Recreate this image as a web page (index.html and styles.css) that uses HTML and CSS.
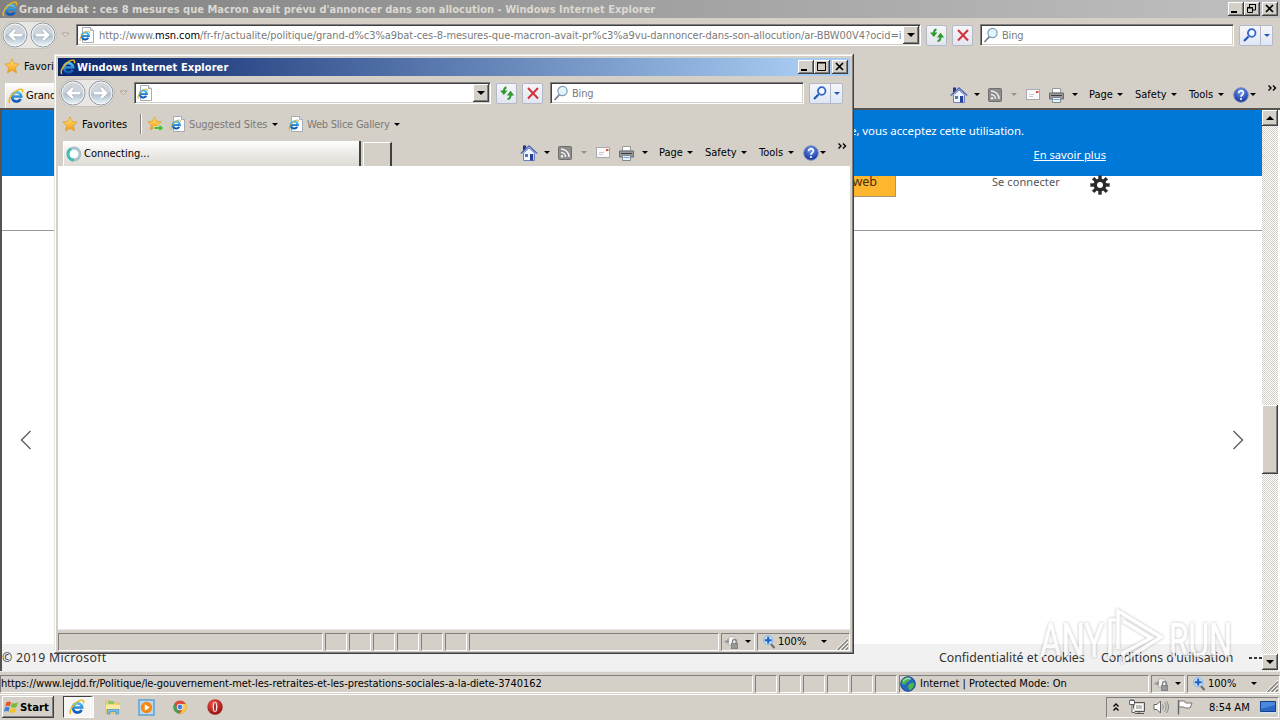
FILE: index.html
```
<!DOCTYPE html>
<html lang="fr">
<head>
  <meta charset="UTF-8">
  <title>Windows Internet Explorer</title>
  <link rel="stylesheet" href="styles.css">
</head>
<body>

  <!-- shared icons -->
  <svg class="defs" width="0" height="0">
    <defs>
      <linearGradient id="gBlue" x1="0" y1="0" x2="0" y2="1"><stop offset="0" stop-color="#4fc3f7"/><stop offset="1" stop-color="#0b56b5"/></linearGradient>
      <linearGradient id="gRound" x1="0" y1="0" x2="0" y2="1"><stop offset="0" stop-color="#d3d6da"/><stop offset=".45" stop-color="#cdd4db"/><stop offset=".55" stop-color="#b3c1cd"/><stop offset="1" stop-color="#eef8fd"/></linearGradient>
      <linearGradient id="gStar" x1="0" y1="0" x2="0" y2="1"><stop offset="0" stop-color="#ffe680"/><stop offset="1" stop-color="#f59a0c"/></linearGradient>
      <radialGradient id="gHelp" cx=".5" cy=".3" r=".7"><stop offset="0" stop-color="#6f9cf0"/><stop offset="1" stop-color="#132f9c"/></radialGradient>
      <radialGradient id="gOpera" cx=".4" cy=".3" r=".8"><stop offset="0" stop-color="#f0564a"/><stop offset="1" stop-color="#8d0508"/></radialGradient>
    </defs>
    <symbol id="ie" viewBox="0 0 16 16">
      <path d="M12.700 10.900A4.700 4.700 0 1 1 13.200 8.500H5" fill="none" stroke="url(#gBlue)" stroke-width="2.700"/>
      <path d="M2 15C-.8 12.500 4.200 4.800 9.400 2.200 12.600.5 15.400.6 14.400 4.200" fill="none" stroke="#e8b81c" stroke-width="1.500"/>
    </symbol>
    <symbol id="iepage" viewBox="0 0 16 16">
      <path d="M3.500.5h8l3 3v12h-11z" fill="#fff" stroke="#a5acb8"/>
      <path d="M11.500.5v3h3" fill="#dfe5ee" stroke="#a5acb8"/>
      <path d="M9.300 10.800A3.500 3.500 0 1 1 9.800 9H3.800" fill="none" stroke="url(#gBlue)" stroke-width="2.200"/>
      <path d="M1.500 14C-.3 12.500 3 7 6.500 5 9 3.500 11 3.800 10.300 6" fill="none" stroke="#d8ac28"/>
    </symbol>
    <symbol id="star" viewBox="0 0 16 16">
      <path d="M8 .8l2.100 4.700 5.100.6-3.800 3.500 1 5.200L8 12.200l-4.400 2.600 1-5.200L.8 6.100l5.100-.6z" fill="url(#gStar)" stroke="#e09a2a" stroke-width=".8"/>
    </symbol>
    <symbol id="back" viewBox="0 0 26 26">
      <circle cx="13" cy="13" r="12" fill="url(#gRound)" stroke="#8f969d"/>
      <circle cx="13" cy="13" r="10.900" fill="none" stroke="#f4f8fb" stroke-width="1"/>
      <path d="M20 13H8M13 8l-5 5 5 5" fill="none" stroke="#97a5b2" stroke-width="4"/>
      <path d="M20 13H8M13 8l-5 5 5 5" fill="none" stroke="#fff" stroke-width="2.800"/>
    </symbol>
    <symbol id="refresh" viewBox="0 0 16 16">
      <path d="M7.500 2.500Q5 2.500 5 6M8.500 14Q11.500 14 11.500 10" fill="none" stroke="#2f9a2f" stroke-width="2"/>
      <path d="M1 5.500h7.500L4.800 10zM7.800 10.500h7.400L11.500 5.800z" fill="#2f9a2f"/>
    </symbol>
    <symbol id="stop" viewBox="0 0 16 16"><path d="M3 3l10 10.500M13 3L3 13.500" stroke="#d2323c" stroke-width="2" fill="none"/></symbol>
    <symbol id="lens" viewBox="0 0 16 16">
      <path d="M6.500 9.500L1.500 15" stroke="#77808a" stroke-width="1.800"/>
      <circle cx="9.500" cy="6" r="4.600" fill="#e3f4fb" stroke="#7b9cb4" stroke-width="1.200"/>
    </symbol>
    <symbol id="golens" viewBox="0 0 16 16">
      <path d="M6.500 9.500L2 14" stroke="#2456b8" stroke-width="2.200"/>
      <circle cx="9.700" cy="6" r="3.800" fill="#f4f9ff" stroke="#2e66cc" stroke-width="1.800"/>
    </symbol>
    <symbol id="home" viewBox="0 0 18 18">
      <path d="M3 1.500h3V5L3 8z" fill="#27308a"/>
      <path d="M3.500 9L9 4l5.500 5v7.500h-11z" fill="#f0f5ff" stroke="#6c82c8"/>
      <path d="M.8 9.500L9 2l8.200 7.500" fill="none" stroke="#4d68bd" stroke-width="1.400"/>
      <path d="M10 10h3.200v6.500H10z" fill="#2a3f96"/><path d="M5 10h3v3H5z" fill="#5078b8"/>
    </symbol>
    <symbol id="rss" viewBox="0 0 14 14">
      <rect x=".5" y=".5" width="13" height="13" rx="1" fill="#8d8d8d" stroke="#6f6f6f"/>
      <path d="M3 3a8 8 0 0 1 8 8M3 6.500A4.500 4.500 0 0 1 7.500 11" fill="none" stroke="#f2f2f2" stroke-width="1.500"/><circle cx="4" cy="10.200" r="1.200" fill="#f2f2f2"/>
    </symbol>
    <symbol id="mail" viewBox="0 0 14 11">
      <rect x=".5" y=".5" width="13" height="10" fill="#fbfbfb" stroke="#a9a9b0"/>
      <path d="M10 2h2.500v2H10z" fill="#d8503c"/><path d="M3 5.500h5M3 7.500h4" stroke="#c9c9cf"/>
    </symbol>
    <symbol id="print" viewBox="0 0 17 16">
      <path d="M4.500 1.500h8V6h-8z" fill="#fff" stroke="#999"/>
      <path d="M1.500 6h14v6h-14z" fill="#97999c" stroke="#6a6c70"/><path d="M3 8.500h11" stroke="#3b3d40"/>
      <path d="M4.500 10.500h8v5h-8z" fill="#e8f2fa" stroke="#808890"/><path d="M5.500 12.500h6" stroke="#6ea6d8"/>
    </symbol>
    <symbol id="help" viewBox="0 0 16 16">
      <circle cx="8" cy="8" r="7.300" fill="url(#gHelp)" stroke="#7f8fc0" stroke-width="1"/>
      <path d="M5.600 6.200C5.600 2.800 10.600 3 10.400 6 10.300 7.800 8 7.700 8 9.700" fill="none" stroke="#fff" stroke-width="1.700"/><circle cx="8" cy="12" r="1.100" fill="#fff"/>
    </symbol>
    <symbol id="lock" viewBox="0 0 17 16">
      <path d="M5 11V6C5 1.500 12.500 1.500 12.500 6v5z" fill="#f4f4f4" stroke="#aaa" stroke-width=".8"/>
      <path d="M.5 8L6 4.500v5z" fill="#9c9c9c"/>
      <path d="M9.500 9V7.500a2 2 0 0 1 4 0V9" fill="none" stroke="#888" stroke-width="1.300"/><path d="M8 9h7v6H8z" fill="#858585"/><path d="M9 11h5M9 13h5" stroke="#aaa"/>
    </symbol>
    <symbol id="zoomin" viewBox="0 0 13 14">
      <path d="M7.500 8.500L11.500 13" stroke="#7a6d6d" stroke-width="2.200"/>
      <circle cx="5.200" cy="5.200" r="4.600" fill="#c4e0f6" stroke="#8ab8de"/><path d="M5.200 1.800v6.800M1.800 5.200h6.800" stroke="#1e5fc4" stroke-width="2"/>
    </symbol>
    <symbol id="grip" viewBox="0 0 12 12">
      <path d="M0 12L12 0M4 12l8-8M8 12l4-4" stroke="#fff"/><path d="M1.500 12L12 1.500M5.500 12L12 5.500M9.500 12L12 9.500" stroke="#808080" stroke-width="1.300"/>
    </symbol>
  </svg>

  <div class="desktop">

    <!-- main browser window -->
    <div class="browser main-win">
      <div class="titlebar inactive">
        <svg class="i16"><use href="#ie"/></svg>
        <span class="title title-main">Grand débat : ces 8 mesures que Macron avait prévu d'annoncer dans son allocution - Windows Internet Explorer</span>
        <div class="winbtns">
          <b><svg viewBox="0 0 16 14"><path d="M3 9h6v2H3z"/></svg></b>
          <b><svg viewBox="0 0 16 14"><path d="M5.500 5V2.500h6V8H9M5 2.500h7M3.500 5.500h5v5h-5zM3 6h6" fill="none" stroke="#000"/></svg></b>
          <b class="close"><svg viewBox="0 0 16 14"><path d="M4 3l7 7M11 3l-7 7" stroke="#000" stroke-width="1.700"/></svg></b>
        </div>
      </div>
      <div class="nav">
        <div class="arrows"><svg><use href="#back"/></svg><svg class="flip"><use href="#back"/></svg></div>
        <svg class="hollow" viewBox="0 0 9 6"><path d="M1 1h7L4.500 4.700z" fill="#e4e1db" stroke="#aaa69f"/></svg>
        <div class="address">
          <svg class="i16"><use href="#iepage"/></svg>
          <span class="url">http://www.<em>msn.com</em>/fr-fr/actualite/politique/grand-d%c3%a9bat-ces-8-mesures-que-macron-avait-pr%c3%a9vu-dannoncer-dans-son-allocution/ar-BBW00V4?ocid=i</span>
          <span class="combo"><i class="arr"></i></span>
        </div>
        <div class="sq"><svg class="i16"><use href="#refresh"/></svg></div>
        <div class="sq"><svg class="i16"><use href="#stop"/></svg></div>
        <div class="search"><svg class="i16"><use href="#lens"/></svg><span>Bing</span></div>
        <div class="go"><svg class="i16"><use href="#golens"/></svg><span><i class="arr blue"></i></span></div>
      </div>
      <div class="favs">
        <svg class="i16"><use href="#star"/></svg><span class="fav-label">Favorites</span>
      </div>
      <div class="tabs">
        <div class="tab"><svg class="i16"><use href="#ie"/></svg><span>Grand débat : ces 8 mesures...</span></div>
        <div class="cmd">
          <svg class="c-home"><use href="#home"/></svg><i class="arr"></i>
          <svg class="c-rss"><use href="#rss"/></svg><i class="arr dim"></i>
          <svg class="c-mail"><use href="#mail"/></svg>
          <svg class="c-print"><use href="#print"/></svg><i class="arr"></i>
          <span class="c-page">Page</span><i class="arr"></i>
          <span class="c-safety">Safety</span><i class="arr"></i>
          <span class="c-tools">Tools</span><i class="arr"></i>
          <svg class="c-help"><use href="#help"/></svg><i class="arr"></i>
          <svg class="more" viewBox="0 0 9 6"><path d="M.5.500L3 3 .5 5.500M5 .5L7.500 3 5 5.500" fill="none" stroke="#000" stroke-width="1.400"/></svg>
        </div>
      </div>
      <div class="content site">
        <div class="page">
          <div class="cookie">
            <p>En continuant à naviguer sur ce site, vous acceptez cette utilisation.</p>
            <a>En savoir plus</a>
          </div>
          <div class="msn-head">
            <span class="web">web</span>
            <span class="login">Se connecter</span>
            <svg class="gear" viewBox="-10 -10 20 20">
              <g fill="#2b2b2b"><path id="t" d="M-1.700-9.700h3.400v19.400h-3.400z"/><use href="#t" transform="rotate(45)"/><use href="#t" transform="rotate(90)"/><use href="#t" transform="rotate(135)"/><circle r="6.500"/></g><circle r="3" fill="#fff"/>
            </svg>
          </div>
          <div class="gallery">
            <svg viewBox="0 0 12 20"><path d="M10.500 1L1.500 10l9 9"/></svg>
            <svg viewBox="0 0 12 20"><path d="M1.500 1l9 9-9 9"/></svg>
          </div>
          <div class="footer">
            <span class="copy">© 2019 Microsoft</span>
            <span class="conf">Confidentialité et cookies</span>
            <span class="cond">Conditions d'utilisation</span>
            <span class="dots"><i></i><i></i><i></i></span>
          </div>
        </div>
        <div class="scroll">
          <b><i class="up"></i></b>
          <b class="thumb"></b>
          <b class="down"><i class="arr"></i></b>
        </div>
      </div>
      <div class="status">
        <div class="cell first"><span class="link">https://www.lejdd.fr/Politique/le-gouvernement-met-les-retraites-et-les-prestations-sociales-a-la-diete-3740162</span></div>
        <div class="cell s"></div><div class="cell s"></div><div class="cell s"></div><div class="cell s"></div><div class="cell s"></div><div class="cell s"></div>
        <div class="cell zone">
          <svg class="i16" viewBox="0 0 16 16"><circle cx="8" cy="8" r="7.300" fill="#2468c0" stroke="#164a8a"/><path d="M3 3c3-2.500 6-2 7-1.300L9 5 6.500 6.500 4 9 1.500 7zM9 8l4-1.500 1.500 2-2 4-3 2-1.500-3z" fill="#4cb748"/><path d="M3 5q4-4 8-2" stroke="#bfe8f8" fill="none"/></svg>
          <span>Internet | Protected Mode: On</span>
        </div>
        <div class="cell prot"><svg><use href="#lock"/></svg><i class="arr"></i></div>
        <div class="cell zoom"><svg class="z"><use href="#zoomin"/></svg><span>100%</span><i class="arr"></i><svg class="grip"><use href="#grip"/></svg></div>
      </div>
    </div>

    <!-- taskbar -->
    <div class="taskbar">
      <div class="start">
        <svg viewBox="0 0 16 16"><path d="M2.500 3C4.500 1.500 6 2 7.500 3L6.300 7.500C5 6.500 3.300 6.300 1.300 7.500z" fill="#e8562a"/><path d="M8.500 3.500c2 1 4 1 6.500-.5L13.500 7.800c-2 1.200-4 1.200-6.200.2z" fill="#7ab93a"/><path d="M1 8.500C3 7.300 4.600 7.500 6 8.500L4.800 13C3.500 12 1.500 12.200 0 13z" fill="#3f83d8"/><path d="M7 9c2 1 4 1 6 0l-1.200 4.500c-2 1-4 1-6 0z" fill="#f7c325"/></svg>
        <span>Start</span>
      </div>
      <div class="task on"><svg><use href="#ie"/></svg></div>
      <svg class="t2" viewBox="0 0 18 18"><path d="M2 3h5l1 2h7v10H2z" fill="#f3d977" stroke="#dcbf66"/><path d="M4 3h6v3H4z" fill="#8fc66b"/><path d="M2 7h14v4H2z" fill="#f8e9a4"/><path d="M3.500 16v-4.500h11V16h-2.500v-2.500H6V16z" fill="#7fc1e8" stroke="#4b95c8" stroke-width=".8"/></svg>
      <svg class="t3" viewBox="0 0 17 17"><rect x="1" y="1" width="15" height="15" fill="#b9daf4" stroke="#5f9fd4" stroke-width="1.500"/><circle cx="8.500" cy="8.500" r="5.700" fill="#f48a16"/><path d="M6.800 5.300l5 3.200-5 3.200z" fill="#fff"/></svg>
      <svg class="t4" viewBox="0 0 14 14"><circle cx="7" cy="7" r="6.600" fill="#de4a38"/><path d="M1.300 3.700L5 10l2 3.600A6.600 6.600 0 0 1 1.300 3.700z" fill="#3da556"/><path d="M7 4h6A6.600 6.600 0 0 1 7 13.600l3-5z" fill="#f7cd37"/><circle cx="7" cy="7" r="3.200" fill="#f3f3f3"/><circle cx="7" cy="7" r="2.400" fill="#4a7fe0"/></svg>
      <svg class="t5" viewBox="0 0 16 16"><circle cx="8" cy="8" r="7.700" fill="url(#gOpera)"/><ellipse cx="8" cy="8" rx="2.300" ry="5.200" fill="#f6e9e6"/><ellipse cx="8" cy="8" rx=".9" ry="4.600" fill="#b31217"/></svg>
      <div class="tray">
        <svg class="chev" viewBox="0 0 6 9"><path d="M.5 3.500L3 1l2.500 2.500M.5 7.500L3 5l2.500 2.500" fill="none" stroke="#000" stroke-width="1.300"/></svg>
        <svg class="net" viewBox="0 0 16 16"><path d="M4.500 3.500h11v9h-11z" fill="#d8d8d4" stroke="#555"/><path d="M6.500 5.500h7v5h-7z" fill="#c0beb8" stroke="#fff"/><path d="M6 14.500h9M10 12.500v2" stroke="#555"/><path d="M.5 1.500h5v4h-5zM2 0v2M4 0v2M3 5.500v8h3" fill="#fff" stroke="#666"/></svg>
        <svg class="vol" viewBox="0 0 16 16"><path d="M1 5.500h3L7.500 2v12L4 10.500H1z" fill="#fff" stroke="#666"/><path d="M9.500 5.500q2 2.500 0 5M11.500 3.500q3.500 4.500 0 9M13.500 2q4 6 0 12" fill="none" stroke="#888"/></svg>
        <svg class="flag" viewBox="0 0 16 16"><path d="M1.500 1v14.500" stroke="#666" stroke-width="1.400"/><path d="M2 2h5.500l1 2h6.500L13 9H8L7 8H2z" fill="#fff" stroke="#777"/></svg>
        <span class="clock">8:54 AM</span>
        <svg class="desk" viewBox="0 0 16 14"><path d="M.5 1.500h15v10H.5z" fill="#2a68c8" stroke="#173f86"/><path d="M1 2h14v3L1 9z" fill="#4c88dc"/><path d="M0 12h16v1.500H0z" fill="#cfe0f4"/></svg>
      </div>
    </div>

    <!-- popup window -->
    <div class="popup">
      <div class="browser">
        <div class="titlebar">
          <svg class="i16"><use href="#ie"/></svg>
          <span class="title title-pop">Windows Internet Explorer</span>
          <div class="winbtns">
            <b><svg viewBox="0 0 16 14"><path d="M3 9h6v2H3z"/></svg></b>
            <b><svg viewBox="0 0 16 14"><path d="M3.500 2.500h8v8h-8zM3 3h9" fill="none" stroke="#000"/></svg></b>
            <b class="close"><svg viewBox="0 0 16 14"><path d="M4 3l7 7M11 3l-7 7" stroke="#000" stroke-width="1.700"/></svg></b>
          </div>
        </div>
        <div class="nav">
          <div class="arrows"><svg><use href="#back"/></svg><svg class="flip"><use href="#back"/></svg></div>
          <svg class="hollow" viewBox="0 0 9 6"><path d="M1 1h7L4.500 4.700z" fill="#e4e1db" stroke="#aaa69f"/></svg>
          <div class="address">
            <svg class="i16"><use href="#iepage"/></svg>
            <span class="url"></span>
            <span class="combo"><i class="arr"></i></span>
          </div>
          <div class="sq"><svg class="i16"><use href="#refresh"/></svg></div>
          <div class="sq"><svg class="i16"><use href="#stop"/></svg></div>
          <div class="search"><svg class="i16"><use href="#lens"/></svg><span>Bing</span></div>
          <div class="go"><svg class="i16"><use href="#golens"/></svg><span><i class="arr blue"></i></span></div>
        </div>
        <div class="favs">
          <svg class="i16"><use href="#star"/></svg><span class="fav-label">Favorites</span>
          <i class="sep"></i>
          <svg class="addfav" viewBox="0 0 18 16"><use href="#star" width="15" height="15"/><path d="M7 10.500h5V8l5 4-5 4v-2.500H7z" fill="#4db83c" stroke="#e8f6e0" stroke-width=".7"/></svg>
          <svg class="i16"><use href="#iepage"/></svg><span class="sug">Suggested Sites</span><i class="arr"></i>
          <svg class="i16 slice"><use href="#iepage"/></svg><span class="wsg">Web Slice Gallery</span><i class="arr"></i>
        </div>
        <div class="tabs">
          <div class="tab">
            <svg class="i16" viewBox="0 0 16 16"><circle cx="8" cy="8" r="6" fill="#fff" stroke="#a9c2cb" stroke-width="2.800"/><path d="M8 14A6 6 0 0 1 5 2.800" fill="none" stroke="#3fbfb4" stroke-width="2.800"/></svg>
            <span class="connecting">Connecting...</span>
          </div>
          <div class="newtab"></div>
          <div class="cmd">
            <svg class="c-home"><use href="#home"/></svg><i class="arr"></i>
            <svg class="c-rss"><use href="#rss"/></svg><i class="arr dim"></i>
            <svg class="c-mail"><use href="#mail"/></svg>
            <svg class="c-print"><use href="#print"/></svg><i class="arr"></i>
            <span class="c-page">Page</span><i class="arr"></i>
            <span class="c-safety">Safety</span><i class="arr"></i>
            <span class="c-tools">Tools</span><i class="arr"></i>
            <svg class="c-help"><use href="#help"/></svg><i class="arr"></i>
            <svg class="more" viewBox="0 0 9 6"><path d="M.5.500L3 3 .5 5.500M5 .5L7.500 3 5 5.500" fill="none" stroke="#000" stroke-width="1.400"/></svg>
          </div>
        </div>
        <div class="content"></div>
        <div class="status">
          <div class="cell first"></div>
          <div class="cell s"></div><div class="cell s"></div><div class="cell s"></div><div class="cell s"></div><div class="cell s"></div><div class="cell s"></div>
          <div class="cell zone"></div>
          <div class="cell prot"><svg><use href="#lock"/></svg><i class="arr"></i></div>
          <div class="cell zoom"><svg class="z"><use href="#zoomin"/></svg><span>100%</span><i class="arr"></i><svg class="grip"><use href="#grip"/></svg></div>
        </div>
      </div>
    </div>

    <!-- watermark -->
    <svg class="watermark" viewBox="0 0 200 66">
      <g class="wm-text">
        <text x="5" y="52" textLength="64" lengthAdjust="spacingAndGlyphs">ANY</text>
        <text x="134" y="52" textLength="63" lengthAdjust="spacingAndGlyphs">RUN</text>
      </g>
      <path d="M83 44V6l43 26-38 24V46M75 54V15h6M88 16l28 17-28 15"/>
    </svg>
  </div>

</body>
</html>
```

FILE: styles.css
```
body {
  margin: 0;
  font-family: "DejaVu Sans Condensed", "DejaVu Sans", sans-serif;
  font-size: 11px;
  color: #000;
  overflow: hidden;
}

svg { display: block; flex: none; }
i { font-style: normal; flex: none; }
.defs { position: absolute; }
.i16 { width: 16px; height: 16px; }

.desktop {
  position: relative;
  width: 1280px;
  height: 720px;
  background: #d4d0c8;
  overflow: hidden;
  white-space: nowrap;
}

.browser {
  display: flex;
  flex-direction: column;
  height: 100%;
  background: #d4d0c8;
}
.main-win { height: 694px; }

/* popup lies over the main window */
.popup {
  position: absolute;
  left: 54px;
  top: 54px;
  width: 800px;
  height: 600px;
  box-sizing: border-box;
  padding: 4px 4px 2px;
  background: #d4d0c8;
  box-shadow: inset -1px -1px #404040, inset 1px 1px #e8e6e0, inset -2px -2px #808080, inset 2px 2px #fff;
}

/* title bar */
.titlebar {
  display: flex;
  align-items: center;
  height: 18px;
  flex: none;
  padding: 0 2px 0 2px;
  background: linear-gradient(90deg, #0a246a, #a6caf0 94%);
}
.titlebar.inactive {
  background: linear-gradient(90deg, #808080, #c0c0c0);
  color: #d4d0c8;
}
.title {
  flex: 1;
  margin-left: 1px;
  font-weight: bold;
  color: #fff;
  letter-spacing: .02px;
}
.title-pop { letter-spacing: .07px; }
.inactive .title { color: #dcd9d2; }
.winbtns { display: flex; }
.winbtns b {
  width: 16px;
  height: 14px;
  background: #d4d0c8;
  box-shadow: inset -1px -1px #404040, inset 1px 1px #fff, inset -2px -2px #808080;
}
.winbtns .close { margin-left: 2px; }

/* navigation row */
.nav {
  display: flex;
  align-items: center;
  height: 32px;
  flex: none;
  padding: 2px 7px 0 2px;
  box-sizing: border-box;
}
.arrows {
  display: flex;
  gap: 2px;
  background: #e9e7e3;
  border-radius: 13px;
  box-shadow: 0 0 0 1px #c6c2bb;
}
.arrows svg { width: 26px; height: 26px; }
.arrows .flip { transform: scaleX(-1); }
.hollow {
  width: 9px;
  height: 6px;
  margin: 0 6px 0 5px;
}
.address, .search {
  display: flex;
  align-items: center;
  height: 22px;
  box-sizing: border-box;
  background: #fff;
  border: 1px solid #808080;
  border-right-color: #fff;
  border-bottom-color: #fff;
  box-shadow: inset 1px 1px #404040, inset -1px -1px #d4d0c8;
  color: #7b7b7b;
}
.address {
  flex: 1;
  min-width: 0;
  padding: 0 1px 0 2px;
}
.url {
  flex: 1;
  min-width: 0;
  overflow: hidden;
  margin-left: 4px;
  letter-spacing: -.058px;
}
.url em { font-style: normal; color: #000; }
.combo {
  display: flex;
  align-items: center;
  justify-content: center;
  width: 16px;
  height: 18px;
  background: #d4d0c8;
  box-shadow: inset -1px -1px #404040, inset 1px 1px #fff, inset -2px -2px #808080;
}
.arr {
  width: 0;
  height: 0;
  border: 3px solid transparent;
  border-top-color: #000;
  border-bottom: 0;
}
.combo .arr { border-width: 4px 4px 0; }
.arr.dim { border-top-color: #96928b; }
.arr.blue { border-top-color: #2456b8; }
.sq {
  display: flex;
  align-items: center;
  justify-content: center;
  width: 21px;
  height: 21px;
  box-sizing: border-box;
  margin-left: 5px;
  border: 1px solid #b3b9c9;
  border-radius: 2px;
  background: linear-gradient(#f5f6f9, #e2e6ef);
}
.search {
  width: 254px;
  margin-left: 7px;
  padding-left: 2px;
}
.search span { margin-left: 3px; letter-spacing: -.2px; }
.go {
  display: flex;
  align-items: center;
  width: 34px;
  height: 21px;
  box-sizing: border-box;
  margin-left: 5px;
  padding-left: 2px;
  border: 1px solid #b3b9c9;
  border-radius: 2px;
  background: linear-gradient(#f5f6f9, #dfe7f5);
}
.go span {
  display: flex;
  align-items: center;
  justify-content: center;
  flex: 1;
  height: 100%;
  margin-left: 2px;
  border-left: 1px solid #b3b9c9;
}

/* favorites row */
.favs {
  display: flex;
  align-items: center;
  height: 32px;
  flex: none;
  padding-left: 4px;
}
.fav-label { width: 46px; margin-left: 4px; letter-spacing: .08px; }
.sep {
  width: 1px;
  height: 20px;
  margin: 0 5px 0 12px;
  background: #808080;
  border-right: 1px solid #fff;
}
.addfav { width: 18px; height: 16px; margin-right: 5px; }
.sug, .wsg { margin-left: 3px; color: #7d7a75; }
.sug { width: 79px; margin-right: 4px; letter-spacing: -.1px; }
.wsg { width: 83px; margin-right: 4px; letter-spacing: -.22px; }
.slice { margin-left: 10px; }

/* tabs + command bar */
.tabs {
  display: flex;
  align-items: flex-end;
  height: 26px;
  flex: none;
  padding-left: 5px;
}
.tab {
  display: flex;
  align-items: center;
  width: 298px;
  height: 25px;
  box-sizing: border-box;
  padding-left: 2px;
  background: linear-gradient(#fff, #f0eeeb 40%, #dedad4);
  border-left: 1px solid #fff;
  border-right: 2px solid #404040;
}
.tab span { margin-left: 2px; }
.newtab {
  width: 29px;
  height: 24px;
  box-sizing: border-box;
  margin-left: 2px;
  border: 1px solid #fff;
  border-bottom: 0;
  border-right: 2px solid #404040;
}
.cmd {
  display: flex;
  align-items: center;
  height: 27px;
  margin-left: auto;
  padding-right: 3px;
}
.cmd span { display: block; }
.c-home { width: 18px; height: 18px; margin-right: 6px; }
.c-rss { width: 14px; height: 14px; margin: 0 9px 0 8px; }
.c-mail { width: 14px; height: 11px; margin: 0 8px 0 9px; }
.c-print { width: 17px; height: 16px; margin-right: 7px; }
.c-page { width: 25px; margin: 0 3px 0 11px; }
.c-safety { width: 32px; margin: 0 4px 0 12px; }
.c-tools { width: 26px; margin: 0 3px 0 12px; }
.c-help { width: 16px; height: 16px; margin: 0 1px 0 9px; }
.more { width: 9px; height: 6px; margin: -14px 0 0 12px; }

/* page area */
.content {
  flex: 1;
  min-height: 0;
  background: #fff;
}
.site {
  display: flex;
  box-sizing: border-box;
  padding-right: 2px;
  border-top: 2px solid #55534f;
  border-left: 2px solid #55534f;
}
.page {
  display: flex;
  flex-direction: column;
  flex: 1;
  font-family: "Noto Sans", "Open Sans", sans-serif;
}
.cookie {
  display: flex;
  flex-direction: column;
  align-items: flex-end;
  height: 66px;
  background: #0078d7;
  color: #fff;
  font-size: 11.500px;
  line-height: 16px;
}
.cookie p {
  margin: 13px 238px 0 0;
  letter-spacing: -.09px;
}
.cookie a {
  margin: 8px 156px 0 0;
  font-size: 11.200px;
  text-decoration: underline;
}
.msn-head {
  display: flex;
  height: 54px;
  border-bottom: 1px solid #999;
}
.web {
  width: 101px;
  height: 21px;
  margin-left: 793px;
  border: 1px solid #a89870;
  border-top: 0;
  background: #ffb62f;
  color: #40300c;
  font-size: 12.500px;
  line-height: 11px;
  text-align: right;
  padding-right: 18px;
  box-sizing: border-box;
}
.login {
  width: 69px;
  margin-left: 96px;
  font-size: 11px;
  line-height: 12px;
  letter-spacing: .08px;
  color: #555;
}
.gear { width: 20px; height: 20px; margin-left: 29px; margin-top: -1px; }
.gallery {
  display: flex;
  justify-content: space-between;
  flex: 1;
  padding: 199px 18px 0;
}
.gallery svg { width: 12px; height: 20px; }
.gallery path { fill: none; stroke: #666; stroke-width: 1.5; }
.footer {
  display: flex;
  align-items: center;
  height: 27px;
  background: #f1f1f1;
  color: #333;
  font-size: 12.300px;
}
.copy { width: 105px; letter-spacing: .33px; }
.conf { width: 147px; margin-left: 832px; }
.cond { width: 133px; margin-left: 15px; }
.dots { display: flex; gap: 2px; margin-left: 15px; }
.dots i { width: 3px; height: 2px; background: #333; }

.scroll {
  display: flex;
  flex-direction: column;
  width: 16px;
  background: repeating-conic-gradient(#fff 0 25%, #d4d0c8 0 50%) 0 0 / 2px 2px;
}
.scroll b {
  display: flex;
  align-items: center;
  justify-content: center;
  height: 16px;
  background: #d4d0c8;
  box-shadow: inset -1px -1px #404040, inset 1px 1px #fff, inset -2px -2px #808080;
}
.scroll .thumb { height: 69px; margin-top: 279px; }
.scroll .down { margin: auto 0 1px; }
.scroll .arr { border-width: 4px 4px 0; }
.up {
  border: 4px solid transparent;
  border-top: 0;
  border-bottom-color: #000;
}

/* status bar */
.status {
  display: flex;
  align-items: center;
  gap: 2px;
  height: 23px;
  flex: none;
  padding-top: 1px;
  border-top: 1px solid #eceae6;
  box-sizing: border-box;
}
.cell {
  display: flex;
  align-items: center;
  height: 18px;
  box-sizing: border-box;
  border: 1px solid #808080;
  border-right-color: #fff;
  border-bottom-color: #fff;
}
.cell.first { flex: 1; min-width: 0; }
.link { letter-spacing: -.07px; }
.cell.s { width: 22px; }
.zone { width: 250px; }
.zone span { margin-left: 4px; }
.prot { width: 34px; padding-left: 1px; }
.prot svg { width: 17px; height: 16px; }
.prot .arr { margin-left: 5px; }
.cell.zoom { width: 93px; padding-left: 5px; }
.zoom .z { width: 13px; height: 14px; }
.zoom span { width: 30px; margin: 0 13px 0 2px; }
.zoom .grip { width: 12px; height: 12px; margin: 5px 0 0 9px; }

/* taskbar */
.taskbar {
  display: flex;
  align-items: center;
  height: 26px;
  box-sizing: border-box;
  border-top: 1px solid #fff;
  padding: 0 1px 1px 2px;
}
.start {
  display: flex;
  align-items: center;
  width: 52px;
  height: 22px;
  box-sizing: border-box;
  padding-left: 2px;
  box-shadow: inset -1px -1px #404040, inset 1px 1px #fff, inset -2px -2px #808080;
  font-weight: bold;
  font-size: 11.300px;
}
.start svg { width: 15px; height: 16px; }
.start span { margin-left: 1px; }
.task {
  display: flex;
  align-items: center;
  justify-content: center;
  width: 31px;
  height: 22px;
  box-sizing: border-box;
  margin-left: 9px;
  background: #f6f5f3;
  border: 1px solid #404040;
  border-right: 4px double #fff;
  border-bottom-color: #fff;
}
.task svg { width: 16px; height: 16px; }
.t2 { width: 18px; height: 18px; margin-left: 10px; }
.t3 { width: 17px; height: 17px; margin-left: 16px; }
.t4 { width: 14px; height: 14px; margin-left: 18px; }
.t5 { width: 16px; height: 16px; margin-left: 20px; }
.tray {
  display: flex;
  align-items: center;
  width: 173px;
  height: 21px;
  box-sizing: border-box;
  margin-left: auto;
  padding-left: 6px;
  border: 1px solid #808080;
  border-right-color: #fff;
  border-bottom-color: #fff;
}
.chev { width: 6px; height: 9px; }
.net { width: 16px; height: 16px; margin-left: 10px; }
.vol { width: 16px; height: 16px; margin-left: 8px; }
.flag { width: 16px; height: 16px; margin-left: 8px; }
.clock { width: 41px; margin-left: 16px; }
.desk { width: 16px; height: 14px; margin-left: 10px; }

/* watermark over everything */
.watermark {
  position: absolute;
  left: 1035px;
  top: 605px;
  width: 200px;
  height: 66px;
  filter: drop-shadow(0 0 1.500px rgba(0, 0, 0, .4));
  opacity: .65;
}
.watermark path { fill: none; stroke: #fff; stroke-width: 3.5; }
.wm-text {
  fill: #fff;
  stroke: #fff;
  stroke-width: .6;
  font-family: Roboto, sans-serif;
  font-size: 48px;
}
```
